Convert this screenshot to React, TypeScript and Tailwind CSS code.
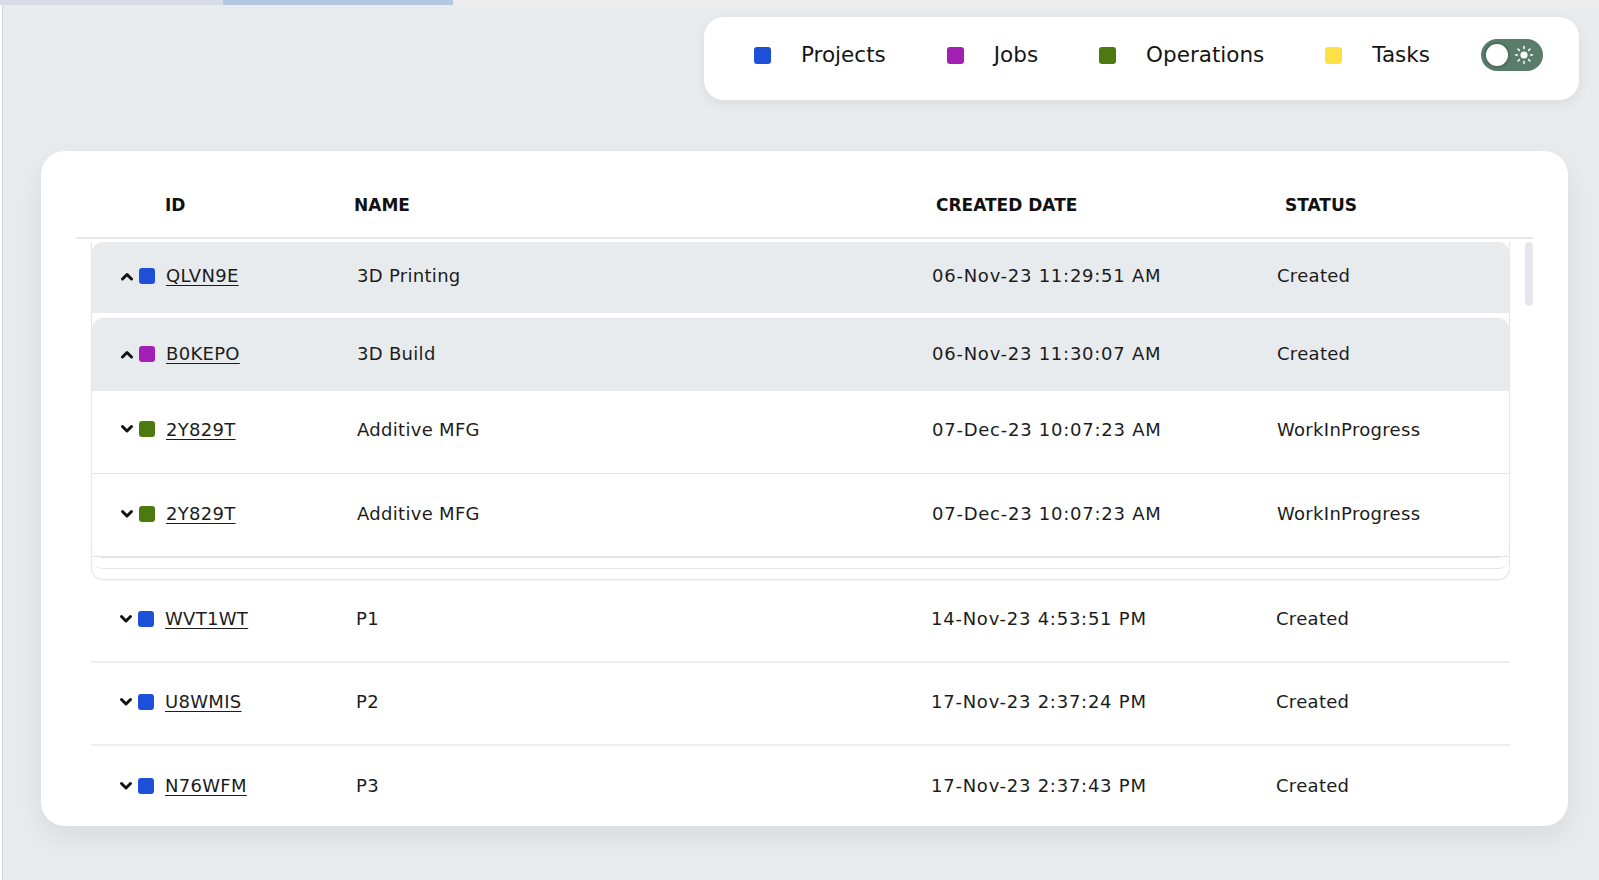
import React from "react";

type Kind = "project" | "job" | "operation" | "task";

const kindColor: Record<Kind, string> = {
  project: "bg-[#1d4fd8]",
  job: "bg-[#a31fb3]",
  operation: "bg-[#4d7a10]",
  task: "bg-[#fde047]",
};

interface Row {
  id: string;
  name: string;
  created: string;
  status: string;
  kind: Kind;
  open?: boolean;
}

const legend: { label: string; kind: Kind }[] = [
  { label: "Projects", kind: "project" },
  { label: "Jobs", kind: "job" },
  { label: "Operations", kind: "operation" },
  { label: "Tasks", kind: "task" },
];

const project: Row = { id: "QLVN9E", name: "3D Printing", created: "06-Nov-23 11:29:51 AM", status: "Created", kind: "project", open: true };
const job: Row = { id: "B0KEPO", name: "3D Build", created: "06-Nov-23 11:30:07 AM", status: "Created", kind: "job", open: true };
const operations: Row[] = [
  { id: "2Y829T", name: "Additive MFG", created: "07-Dec-23 10:07:23 AM", status: "WorkInProgress", kind: "operation" },
  { id: "2Y829T", name: "Additive MFG", created: "07-Dec-23 10:07:23 AM", status: "WorkInProgress", kind: "operation" },
];
const others: Row[] = [
  { id: "WVT1WT", name: "P1", created: "14-Nov-23 4:53:51 PM", status: "Created", kind: "project" },
  { id: "U8WMIS", name: "P2", created: "17-Nov-23 2:37:24 PM", status: "Created", kind: "project" },
  { id: "N76WFM", name: "P3", created: "17-Nov-23 2:37:43 PM", status: "Created", kind: "project" },
];

function Chevron({ up }: { up?: boolean }) {
  return (
    <svg width="14" height="10" viewBox="0 0 14 10" className="shrink-0">
      <polyline
        points={up ? "2.5,8 7,3.5 11.5,8" : "2.5,2.5 7,7 11.5,2.5"}
        fill="none"
        stroke="#111"
        strokeWidth="3"
        strokeLinecap="round"
        strokeLinejoin="round"
      />
    </svg>
  );
}

function Sun() {
  return (
    <svg width="20" height="20" viewBox="0 0 20 20">
      <circle cx="10" cy="10" r="3.6" fill="white" />
      <g stroke="white" strokeWidth="1.5" strokeLinecap="round">
        <line x1="10" y1="1.5" x2="10" y2="3.5" />
        <line x1="10" y1="16.5" x2="10" y2="18.5" />
        <line x1="1.5" y1="10" x2="3.5" y2="10" />
        <line x1="16.5" y1="10" x2="18.5" y2="10" />
        <line x1="4" y1="4" x2="5.4" y2="5.4" />
        <line x1="14.6" y1="14.6" x2="16" y2="16" />
        <line x1="4" y1="16" x2="5.4" y2="14.6" />
        <line x1="14.6" y1="5.4" x2="16" y2="4" />
      </g>
    </svg>
  );
}

function TableRow({ row, className }: { row: Row; className: string }) {
  return (
    <div className={`grid grid-cols-[265px_575px_345px_1fr] items-center text-[18px] tracking-[0.3px] text-[#1c1c1c] ${className}`}>
      <div className="flex items-center pl-[28px]">
        <Chevron up={row.open} />
        <span className={`ml-[5px] h-[16px] w-[16px] rounded-[3px] ${kindColor[row.kind]}`} />
        <a className="ml-[11px] underline underline-offset-[3px] decoration-[1px]">{row.id}</a>
      </div>
      <div>{row.name}</div>
      <div className="tracking-[0.75px]">{row.created}</div>
      <div>{row.status}</div>
    </div>
  );
}

export default function App() {
  return (
    <div
      className="relative h-[880px] w-full overflow-hidden bg-[#e8ecef]"
      style={{ fontFamily: '"DejaVu Sans", Verdana, sans-serif' }}
    >
      <div className="flex h-[5px]">
        <div className="w-[223px] bg-[#d8dde8]" />
        <div className="w-[230px] bg-[#b2c8e1]" />
        <div className="flex-1 bg-[#ececec]" />
      </div>
      <div className="absolute bottom-0 left-0 top-[5px] w-[3px] border-r border-[#c9d1dc] bg-white" />

      <div className="flex justify-end pr-[20px] pt-[12px]">
        <div className="flex h-[83px] w-[875px] items-center rounded-[20px] bg-white pb-[7px] pl-[50px] pr-[35px] shadow-[0_4px_14px_rgba(0,0,0,0.07)]">
          {legend.map((l) => (
            <div key={l.label} className="mr-[61px] flex items-center">
              <span className={`h-[17px] w-[17px] rounded-[3px] ${kindColor[l.kind]}`} />
              <span className="ml-[30px] text-[21.5px] text-[#151515]">{l.label}</span>
            </div>
          ))}
          <div className="-ml-[10px] flex h-[32px] w-[62px] items-center rounded-full bg-[#5a7c6b] px-[3px]">
            <span className="h-[26px] w-[26px] rounded-full border-2 border-[#4d6e5d] bg-white" />
            <span className="ml-[4px] flex items-center">
              <Sun />
            </span>
          </div>
        </div>
      </div>

      <div className="ml-[41px] mt-[51px] h-[675px] w-[1527px] overflow-hidden rounded-[24px] bg-white px-[35px] pt-[20px] shadow-[0_12px_30px_rgba(0,0,0,0.08)]">
        <div className="grid h-[68px] grid-cols-[278px_582px_349px_1fr] items-center border-b-2 border-[#e6e9ed] pt-[4px] text-[17px] font-bold text-[#111]">
          <div className="pl-[89px]">ID</div>
          <div>NAME</div>
          <div>CREATED DATE</div>
          <div>STATUS</div>
        </div>

        <div className="relative">
          <div className="absolute right-0 top-[3px] h-[64px] w-[8px] rounded-sm bg-[#e4e7eb]" />
          <div className="ml-[15px] mr-[23px] pt-[3px]">
            <div className="rounded-b-[12px] border border-t-0 border-[#e3e6ea] pb-[10px] shadow-[0_1px_2px_rgba(0,0,0,0.05)]">
              <TableRow row={project} className="h-[71px] rounded-tl-[10px] rounded-tr-[10px] bg-[#e8ebee] pb-[4px]" />
              <div className="mt-[5px] rounded-[10px] rounded-t-[10px] border-t border-b border-[#e3e6ea] pb-[10px]">
                <TableRow row={job} className="h-[72px] rounded-t-[10px] bg-[#e8ebee] pb-[3px]" />
                <div className="rounded-b-[10px] border-b border-[#e3e6ea]">
                  {operations.map((r, i) => (
                    <TableRow key={i} row={r} className={`h-[83px] border-b border-[#e3e6ea] ${i === 0 ? "pb-[6px]" : "pb-[3px]"}`} />
                  ))}
                </div>
              </div>
            </div>
            {others.map((r, i) => (
              <TableRow
                key={r.id}
                row={r}
                className={`h-[83px] pb-[4px] ${i < others.length - 1 ? "border-b-2 border-[#eceef1]" : ""}`}
              />
            ))}
          </div>
        </div>
      </div>
    </div>
  );
}
